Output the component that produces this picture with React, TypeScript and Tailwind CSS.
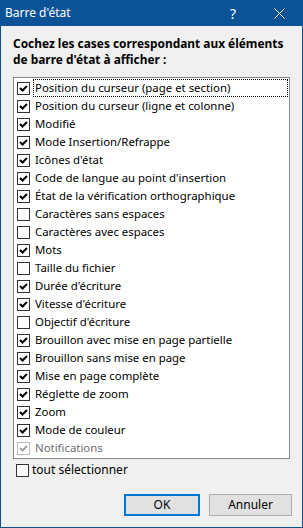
import { useState } from "react";

const ITEMS: { label: string; checked: boolean; disabled?: boolean }[] = [
  { label: "Position du curseur (page et section)", checked: true },
  { label: "Position du curseur (ligne et colonne)", checked: true },
  { label: "Modifié", checked: true },
  { label: "Mode Insertion/Refrappe", checked: true },
  { label: "Icônes d'état", checked: true },
  { label: "Code de langue au point d'insertion", checked: true },
  { label: "État de la vérification orthographique", checked: true },
  { label: "Caractères sans espaces", checked: false },
  { label: "Caractères avec espaces", checked: false },
  { label: "Mots", checked: true },
  { label: "Taille du fichier", checked: false },
  { label: "Durée d'écriture", checked: true },
  { label: "Vitesse d'écriture", checked: true },
  { label: "Objectif d'écriture", checked: false },
  { label: "Brouillon avec mise en page partielle", checked: true },
  { label: "Brouillon sans mise en page", checked: true },
  { label: "Mise en page complète", checked: true },
  { label: "Réglette de zoom", checked: true },
  { label: "Zoom", checked: true },
  { label: "Mode de couleur", checked: true },
  { label: "Notifications", checked: true, disabled: true },
];

function CheckBox({ checked, disabled }: { checked: boolean; disabled?: boolean }) {
  return (
    <span
      className={`flex h-[13px] w-[13px] shrink-0 items-center justify-center border bg-white ${
        disabled ? "border-[#bcbcbc]" : "border-[#333333]"
      }`}
    >
      {checked && (
        <svg width="11" height="11" viewBox="0 0 11 11">
          <path
            d="M2 5 L4.5 7.5 L9 3"
            fill="none"
            stroke={disabled ? "#a0a0a0" : "#000000"}
            strokeWidth="2"
          />
        </svg>
      )}
    </span>
  );
}

export default function App() {
  const [items, setItems] = useState(ITEMS);
  const [all, setAll] = useState(false);

  const toggle = (i: number) => {
    if (items[i].disabled) return;
    setItems(items.map((it, j) => (j === i ? { ...it, checked: !it.checked } : it)));
  };

  return (
    <div
      className="flex h-[528px] w-[303px] flex-col border-x border-b border-[#0c5296] bg-[#f0f0f0] text-[11.4px] text-black"
      style={{ fontFamily: '"Noto Sans", "Open Sans", sans-serif' }}
    >
      <div className="flex h-[26px] shrink-0 items-center bg-[#0c5296] pl-[4px] text-[12px] text-white">
        <span className="flex-1">Barre d'état</span>
        <span className="w-[46px] text-center text-[14px]">?</span>
        <span className="flex w-[46px] items-center justify-center">
          <svg width="11" height="11" viewBox="0 0 11 11">
            <path d="M0.5 0.5 L10.5 10.5 M10.5 0.5 L0.5 10.5" stroke="#ffffff" strokeWidth="1" />
          </svg>
        </span>
      </div>

      <div className="flex flex-1 flex-col px-[12px] pt-[9px]">
        <p className="text-[11.9px] font-bold leading-[16px]">
          Cochez les cases correspondant aux éléments de barre d'état à afficher :
        </p>

        <div className="mt-[10px] h-[382px] border border-[#828790] bg-white p-px">
          {items.map((it, i) => (
            <div
              key={it.label}
              onClick={() => toggle(i)}
              className="flex h-[18px] items-center pl-[2px]"
            >
              <CheckBox checked={it.checked} disabled={it.disabled} />
              <span
                className={`ml-[3px] flex h-[18px] flex-1 items-center pl-px leading-none ${
                  i === 0 ? "border border-dotted border-black" : "border border-transparent"
                } ${it.disabled ? "text-[#6d6d6d]" : ""}`}
              >
                {it.label}
              </span>
            </div>
          ))}
        </div>

        <label className="mt-[2px] flex h-[18px] items-center pl-[3px]" onClick={() => setAll(!all)}>
          <CheckBox checked={all} />
          <span className="ml-[3px] text-[12px]">tout sélectionner</span>
        </label>

        <div className="mt-[15px] flex justify-end gap-[9px]">
          <button
            type="button"
            className="h-[22px] w-[76px] border-2 border-[#0078d7] bg-[#e1e1e1] text-[12px]"
          >
            OK
          </button>
          <button
            type="button"
            className="mr-[-2px] h-[22px] w-[83px] border border-[#adadad] bg-[#e1e1e1] text-[12px]"
          >
            Annuler
          </button>
        </div>
      </div>
    </div>
  );
}
